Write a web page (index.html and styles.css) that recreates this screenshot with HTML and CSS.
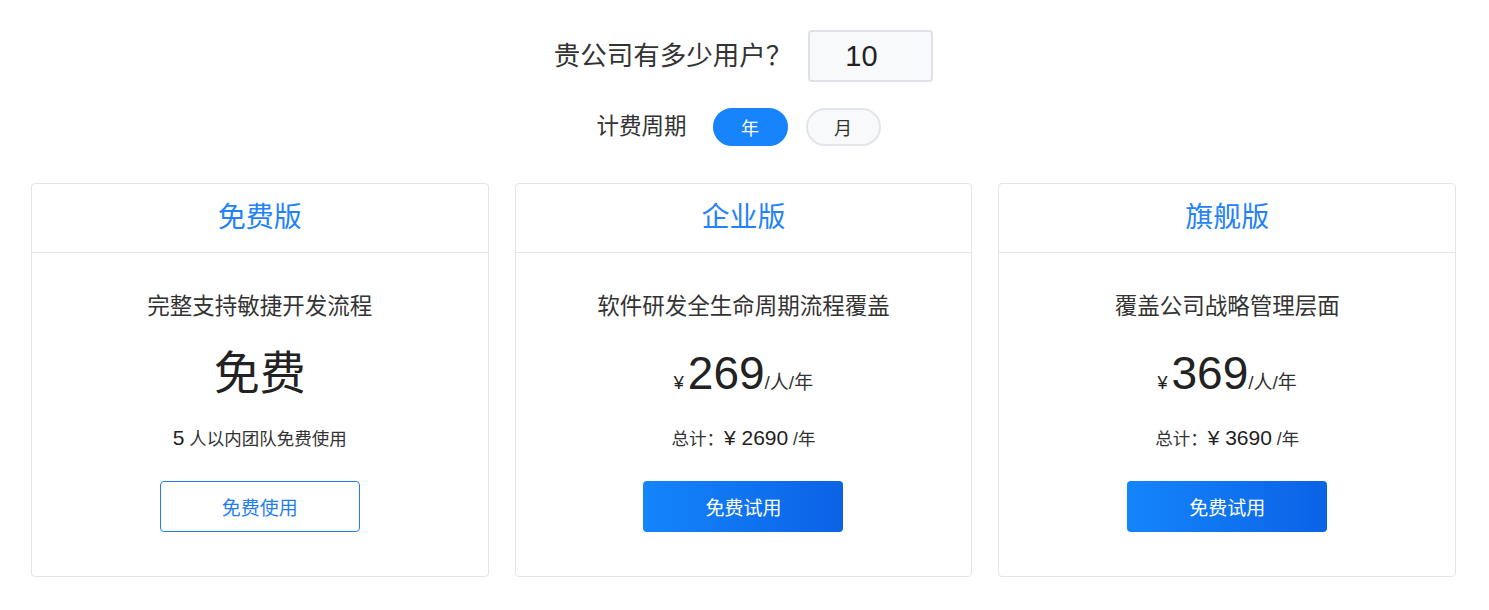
FILE: index.html
```html
<!DOCTYPE html>
<html lang="zh-CN">
<head>
  <meta charset="UTF-8" />
  <title>价格</title>
  <meta name="viewport" content="width=device-width, initial-scale=1.0" />
  <link rel="stylesheet" href="styles.css">
</head>
<body>
  <div class="pricing">
    <div class="users-row">
      <label for="users" class="users-label">贵公司有多少用户？</label>
      <input type="text" id="users" class="users-input" value="10" />
    </div>

    <div class="period-row">
      <span class="period-label">计费周期</span>
      <button type="button" class="period-btn active">年</button>
      <button type="button" class="period-btn">月</button>
    </div>

    <div class="plans">
      <div class="plan">
        <div class="plan-head">免费版</div>
        <div class="plan-body">
          <p class="plan-desc">完整支持敏捷开发流程</p>
          <div class="plan-price"><span class="free">免费</span></div>
          <p class="plan-sub"><span class="num">5</span> 人以内团队免费使用</p>
          <button type="button" class="plan-btn outline">免费使用</button>
        </div>
      </div>

      <div class="plan">
        <div class="plan-head">企业版</div>
        <div class="plan-body">
          <p class="plan-desc">软件研发全生命周期流程覆盖</p>
          <div class="plan-price">
            <span class="yen">¥</span><span class="amount">269</span><span class="unit">/人/年</span>
          </div>
          <p class="plan-sub">总计：<span class="num">¥ 2690</span> /年</p>
          <button type="button" class="plan-btn primary">免费试用</button>
        </div>
      </div>

      <div class="plan">
        <div class="plan-head">旗舰版</div>
        <div class="plan-body">
          <p class="plan-desc">覆盖公司战略管理层面</p>
          <div class="plan-price">
            <span class="yen">¥</span><span class="amount">369</span><span class="unit">/人/年</span>
          </div>
          <p class="plan-sub">总计：<span class="num">¥ 3690</span> /年</p>
          <button type="button" class="plan-btn primary">免费试用</button>
        </div>
      </div>
    </div>
  </div>
</body>
</html>
```

FILE: styles.css
```css
body {
  margin: 0;
  font-family: "Liberation Sans", "Noto Sans CJK SC", sans-serif;
  background-color: #ffffff;
  color: #333;
}

.pricing {
  width: 1425px;
  margin-left: 31px;
  padding-top: 30px;
}

.users-row {
  display: flex;
  justify-content: center;
  align-items: center;
  gap: 16px;
}

.users-label {
  font-size: 26.5px;
  line-height: 52px;
  color: #333;
}

.users-input {
  box-sizing: border-box;
  width: 125px;
  height: 52px;
  padding: 0 0 0 35px;
  border: 2px solid #dfe2e8;
  border-radius: 4px;
  background-color: #f7f9fb;
  font-family: "Liberation Sans", sans-serif;
  font-size: 29px;
  color: #222;
  outline: none;
}

.period-row {
  display: flex;
  justify-content: center;
  align-items: center;
  margin-top: 26px;
  padding-right: 10px;
}

.period-label {
  font-size: 22.5px;
  line-height: 38px;
  margin-right: 26px;
}

.period-btn {
  box-sizing: border-box;
  width: 75px;
  height: 38px;
  margin-right: 18px;
  border: 2px solid #e2e5ea;
  border-radius: 19px;
  background-color: #f7f9fb;
  font-family: "Noto Sans CJK SC", sans-serif;
  font-size: 18px;
  color: #333;
  cursor: pointer;
}

.period-btn:last-child {
  margin-right: 0;
}

.period-btn.active {
  background-color: #1784fb;
  border-color: #1784fb;
  color: #fff;
}

.plans {
  display: grid;
  grid-template-columns: repeat(3, 1fr);
  gap: 26px;
  margin-top: 37px;
}

.plan {
  border: 1px solid #e2e5ea;
  border-radius: 4px;
  background-color: #fff;
}

.plan-head {
  height: 68px;
  line-height: 68px;
  text-align: center;
  font-size: 28px;
  color: #2383f6;
  border-bottom: 1px solid #e2e5ea;
}

.plan-body {
  display: flex;
  flex-direction: column;
  align-items: center;
  padding: 39px 0 44px;
}

.plan-desc {
  margin: 0;
  font-size: 22.5px;
  line-height: 30px;
  color: #333;
}

.plan-price {
  display: flex;
  align-items: baseline;
  height: 60px;
  line-height: 60px;
  margin-top: 21px;
  color: #222;
}

.free {
  font-size: 46px;
}

.yen {
  font-size: 18px;
  margin-right: 4px;
}

.amount {
  font-size: 46px;
}

.unit {
  font-size: 19px;
  color: #333;
}

.plan-sub {
  margin: 23px 0 0;
  font-size: 17.5px;
  line-height: 24px;
  color: #333;
}

.plan-sub .num {
  font-size: 21px;
  color: #222;
}

.plan-btn {
  box-sizing: border-box;
  width: 200px;
  height: 51px;
  margin-top: 30px;
  border-radius: 4px;
  font-family: "Noto Sans CJK SC", sans-serif;
  font-size: 19px;
  cursor: pointer;
}

.plan-btn.outline {
  background-color: #fff;
  border: 1px solid #1f7ef0;
  color: #1f7ef0;
}

.plan-btn.primary {
  border: none;
  background: linear-gradient(90deg, #1485fb, #0b62e6);
  color: #fff;
}
```
